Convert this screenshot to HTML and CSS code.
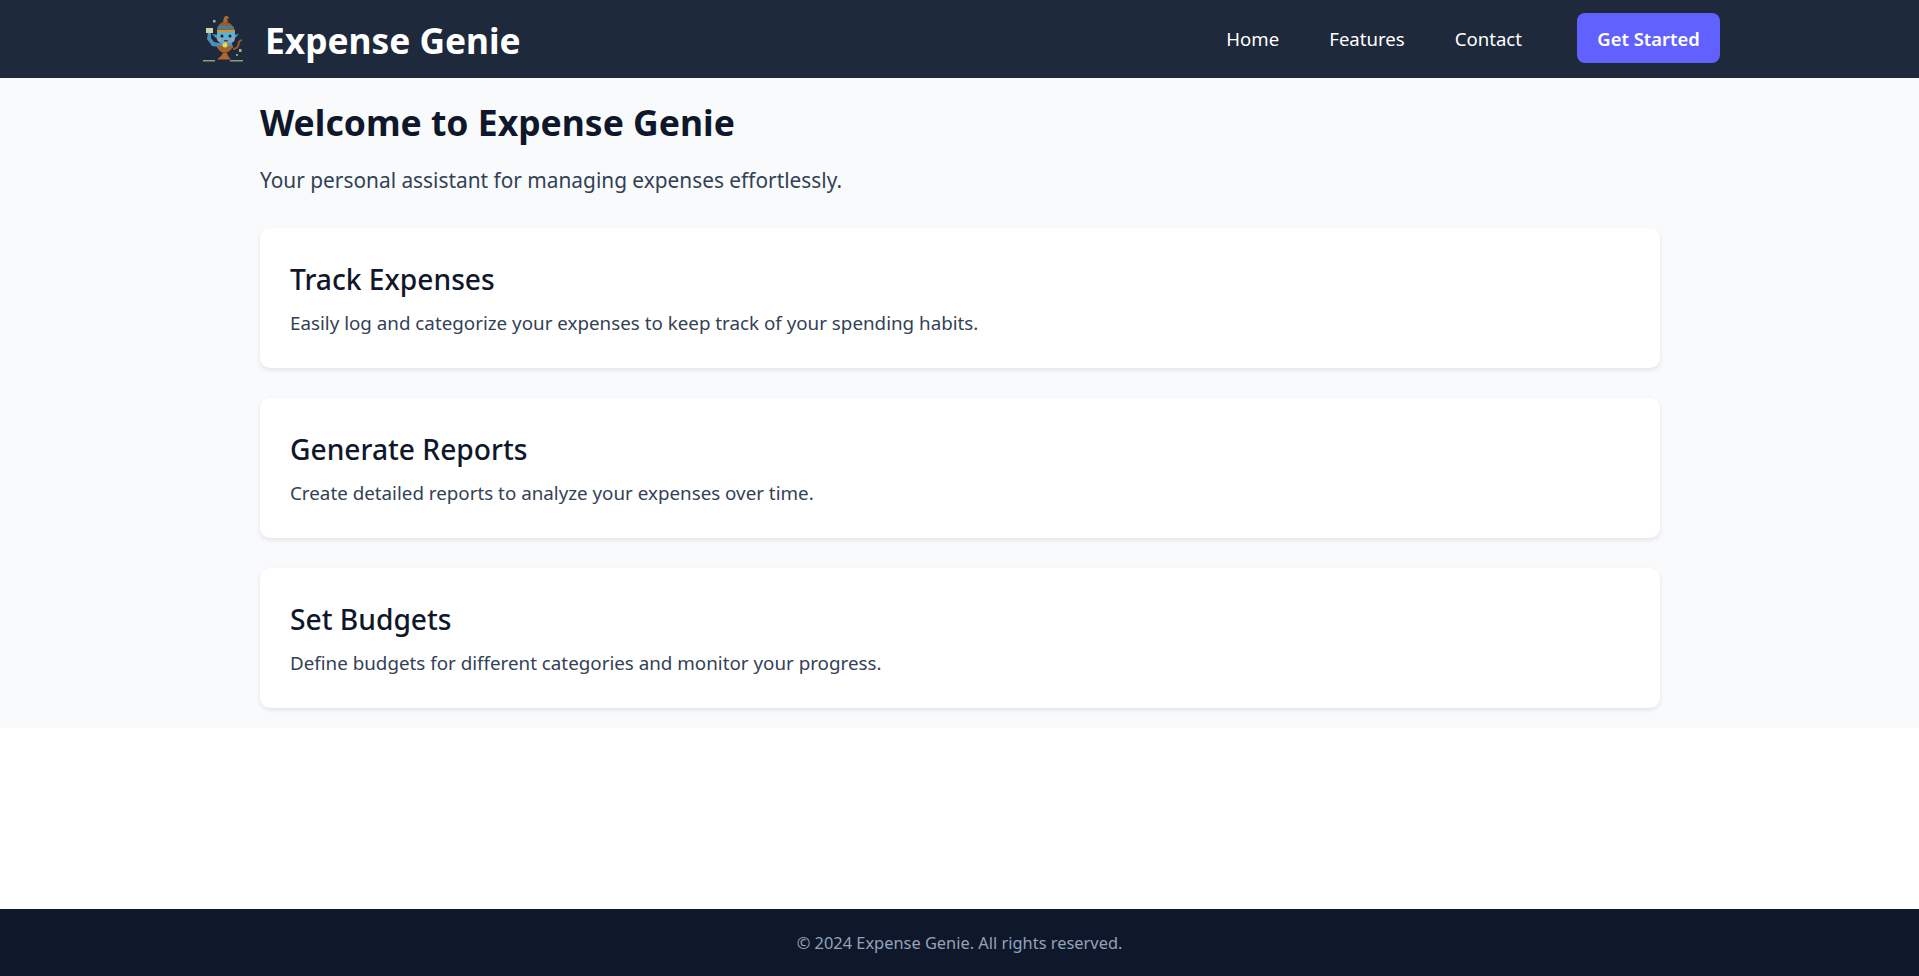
FILE: index.html
```html
<!DOCTYPE html>
<html lang="en">
<head>
<meta charset="utf-8">
<title>Expense Genie</title>
<link rel="stylesheet" href="styles.css">
</head>
<body>
<div class="page">
  <header class="topbar">
    <div class="brand">
      <svg class="logo" width="48" height="48" viewBox="0 0 48 48" aria-hidden="true">
        <path d="M25 1c3-.5 4 1 4 2.500l-2 .5 1 3-5 1 .5-4z" fill="#a8692f"/>
        <path d="M17 17c0-6 3-10 8-10s9 4 10 10z" fill="#8f6236"/>
        <path d="M18 11h15l1.500 3H17z" fill="#4a7f9c"/>
        <rect x="17" y="15" width="18" height="2.500" fill="#c9953f"/>
        <path d="M12 19l6 1v5zM39 19l-6 1v5z" fill="#4f97b8"/>
        <path d="M17 17h18v6c0 4-4 6-9 6s-9-2-9-6z" fill="#62b0cd"/>
        <circle cx="22" cy="21" r="1.500" fill="#14222f"/>
        <circle cx="30" cy="21" r="1.500" fill="#14222f"/>
        <circle cx="19.500" cy="25" r="1.800" fill="#d98aa0"/>
        <circle cx="32.500" cy="25" r="1.800" fill="#d98aa0"/>
        <path d="M24 25h4v1.500h-4z" fill="#7a3045"/>
        <path d="M8 17l-1 7 5 7 7 1v-4l-5-1-3-4 0-6z" fill="#4b8fba"/>
        <rect x="6" y="13" width="7" height="5" fill="#cdd4ae"/>
        <path d="M18 28h14l1 5H17z" fill="#4f93bb"/>
        <path d="M17 31c2 9 13 9 16 0z" fill="#a4622c"/>
        <circle cx="25" cy="30" r="2.500" fill="#f5d648"/>
        <path d="M33 33c3 0 5-3 5-7l4-2v2l-2 1c0 5-3 8-7 8z" fill="#8d5a2c"/>
        <path d="M23 38h4l1 3 3 3.500H17l4-3.500z" fill="#b0662c"/>
        <path d="M3 45h12v1.500H3zM30 45h13v1.500H30z" fill="#8e9a7a"/>
        <rect x="13" y="5" width="2.500" height="2.500" fill="#aab488"/>
        <rect x="39" y="34" width="2.500" height="3" fill="#aab488"/>
        <rect x="36" y="39" width="2" height="2" fill="#8d9878"/>
      </svg>
      <span class="brand-name">Expense Genie</span>
    </div>
    <nav class="nav">
      <a class="nav-link" href="#">Home</a>
      <a class="nav-link" href="#">Features</a>
      <a class="nav-link" href="#">Contact</a>
      <a class="cta" href="#">Get Started</a>
    </nav>
  </header>
  <main class="content">
    <h1 class="title">Welcome to Expense Genie</h1>
    <p class="lead">Your personal assistant for managing expenses effortlessly.</p>
    <section class="card">
      <h2 class="card-title">Track Expenses</h2>
      <p class="card-text">Easily log and categorize your expenses to keep track of your spending habits.</p>
    </section>
    <section class="card">
      <h2 class="card-title">Generate Reports</h2>
      <p class="card-text">Create detailed reports to analyze your expenses over time.</p>
    </section>
    <section class="card">
      <h2 class="card-title">Set Budgets</h2>
      <p class="card-text">Define budgets for different categories and monitor your progress.</p>
    </section>
  </main>
  <footer class="footer">© 2024 Expense Genie. All rights reserved.</footer>
</div>
</body>
</html>
```
FILE: styles.css
```css
* { box-sizing: border-box; }
html, body { margin: 0; padding: 0; }
body { font-family: "Noto Sans", "Open Sans", sans-serif; background: #ffffff; color: #0f172a; }
.page { height: 976px; display: flex; flex-direction: column; }
.topbar { height: 78px; background: #1e293b; padding: 0 199px 0 200px; display: flex; align-items: center; justify-content: space-between; flex: none; }
.brand { display: flex; align-items: center; gap: 17px; }
.logo { display: block; filter: blur(0.5px); }
.brand-name { color: #ffffff; font-size: 35.3px; font-weight: 700; line-height: 48px; padding-top: 2px; }
.nav { display: flex; align-items: center; }
.nav-link { color: #ffffff; text-decoration: none; font-size: 18.6px; margin-right: 50px; line-height: 24px; }
.cta { margin: 0 0 2px 5px; width: 143px; height: 50px; background: #6161ff; color: #ffffff; text-decoration: none; font-size: 18.4px; font-weight: 600; border-radius: 8px; display: flex; align-items: center; justify-content: center; }
.content { height: 650px; flex: none; background: #f8fafc; padding: 0 259px 0 260px; }
.title { margin: 0; padding-top: 20px; font-size: 35.5px; line-height: 48px; font-weight: 700; color: #0f172a; }
.lead { margin: 20px 0 0; font-size: 20.85px; line-height: 29px; color: #334155; }
.card { height: 140px; margin-top: 30px; background: #ffffff; border-radius: 10px; padding: 33px 30px 0; box-shadow: 0 2px 4px rgba(15, 23, 42, 0.1); }
.lead + .card { margin-top: 33px; }
.card-title { margin: 0; font-size: 28.2px; line-height: 36px; font-weight: 500; color: #0f172a; }
.card-text { margin: 13px 0 0; font-size: 18.8px; line-height: 26px; color: #334155; }
.footer { margin-top: auto; height: 67px; flex: none; background: #0f172a; color: #94a3b8; font-size: 16.4px; display: flex; align-items: center; justify-content: center; }
```
